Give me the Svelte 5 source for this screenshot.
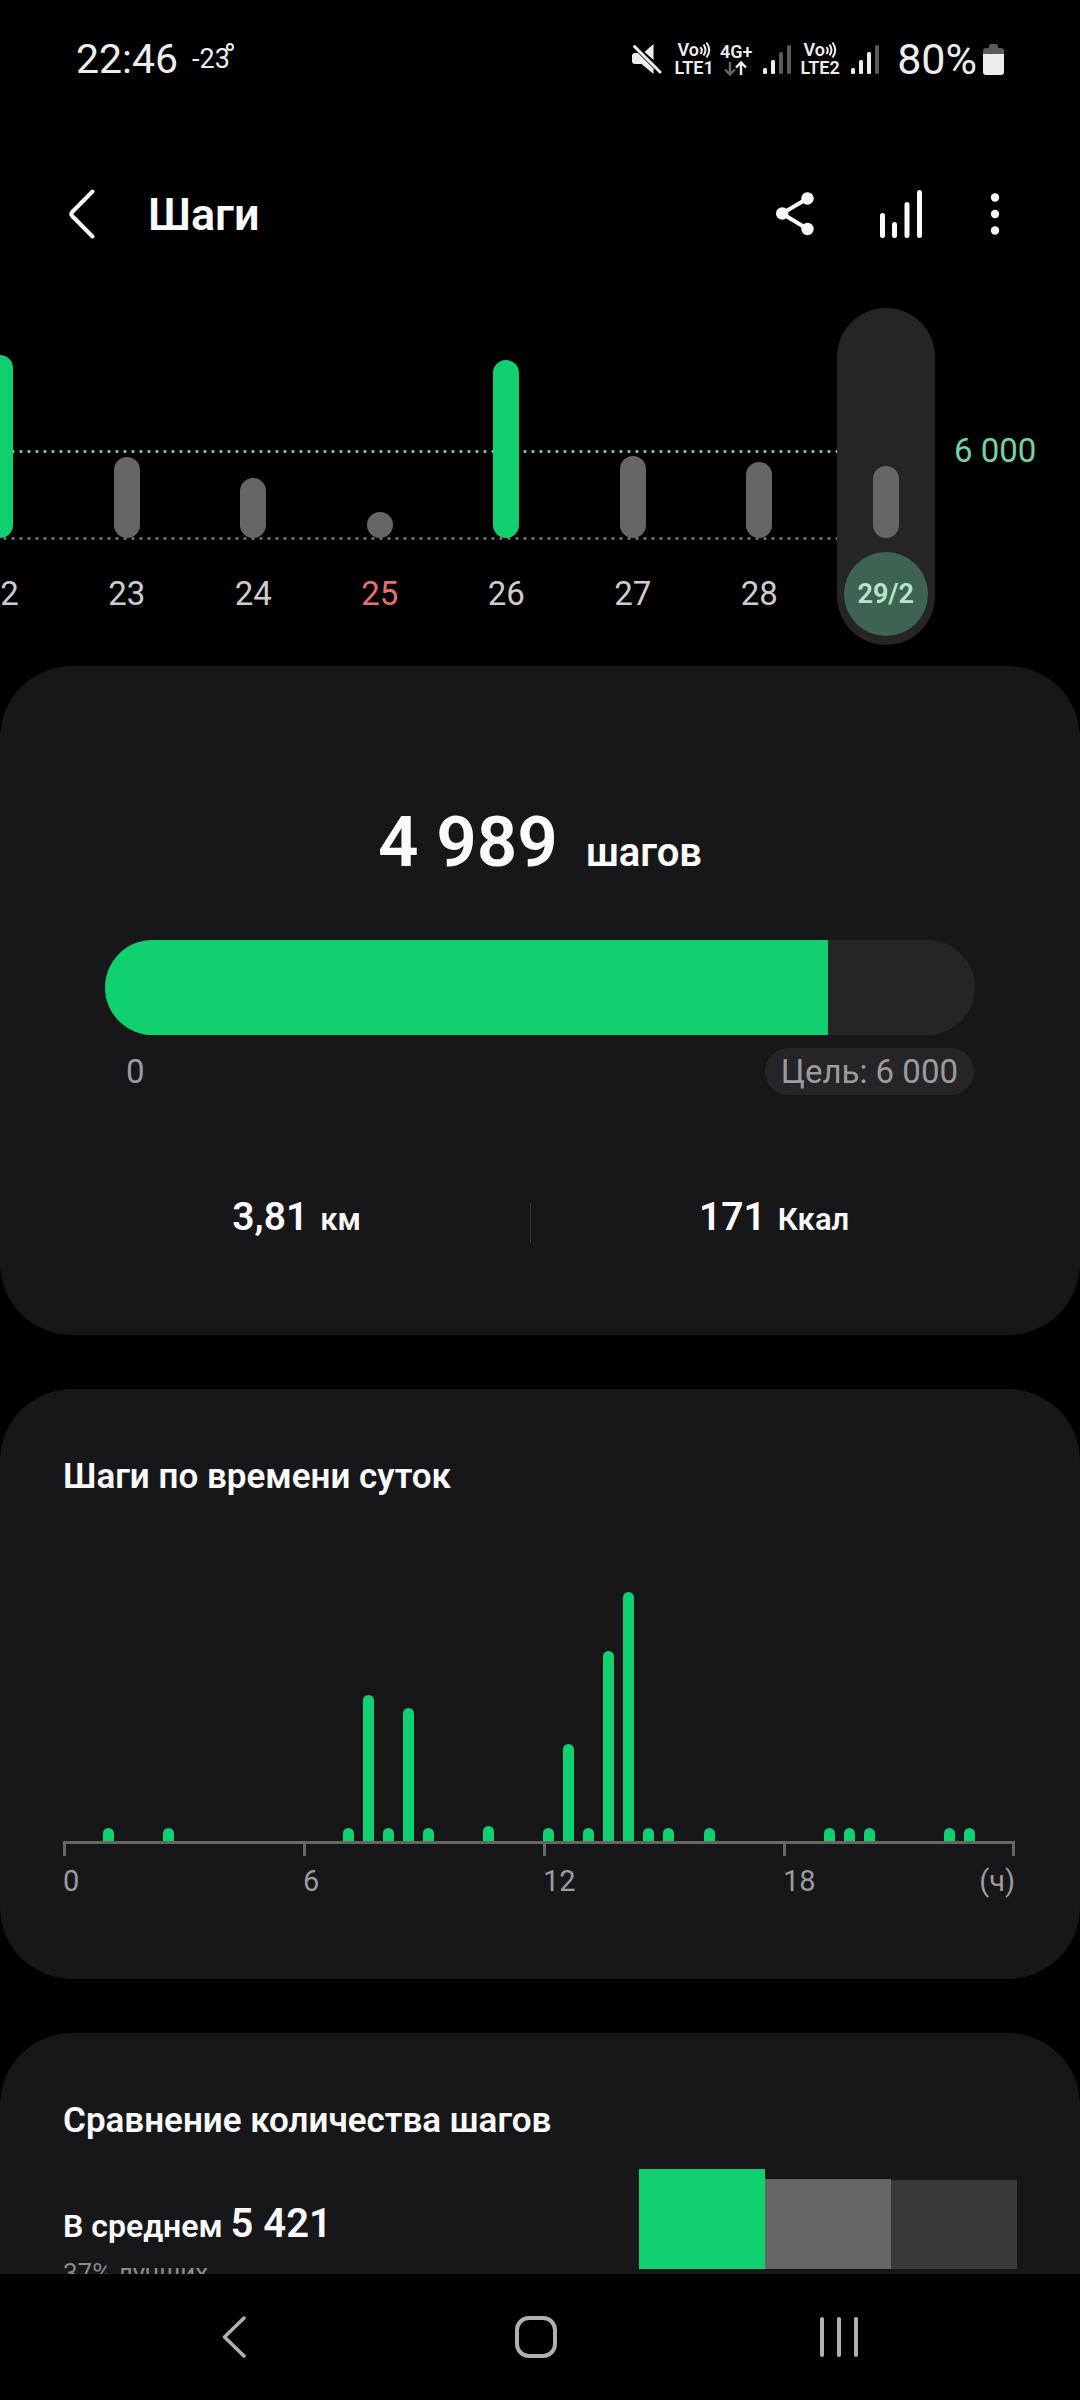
<script>
  const goal = 6000;
  const steps = 4989;

  // bar heights are pixels inside the plot
  const days = [
    { label: '22', height: 183, done: true },
    { label: '23', height: 81 },
    { label: '24', height: 60 },
    { label: '25', height: 26, holiday: true },
    { label: '26', height: 178, done: true },
    { label: '27', height: 82 },
    { label: '28', height: 76 },
    { label: '29/2', height: 72 },
  ];

  let selected = $state('29/2');

  // one slot per half hour
  const activity = {
    2: 13, 5: 13, 14: 13, 15: 146, 16: 13, 17: 133, 18: 13, 21: 15,
    24: 13, 25: 97, 26: 13, 27: 190, 28: 249, 29: 13, 30: 13, 32: 13,
    38: 13, 39: 13, 40: 13, 44: 13, 45: 13,
  };
  const slots = Array.from({ length: 48 }, (_, i) => activity[i] ?? 0);

  const format = (n) => String(n).replace(/\B(?=(\d{3})+$)/g, '\u00a0');
</script>

{#snippet signal(level)}
  <svg class="signal" width="28" height="30" viewBox="0 0 28 30" aria-hidden="true">
    {#each [24, 16, 8, 1] as top, i}
      <rect x={i * 8} y={top} width="4" height={30 - top} rx="1.5" fill={i < level ? '#ededed' : '#5a5a5a'} />
    {/each}
  </svg>
{/snippet}

{#snippet volte(n)}
  <div class="volte">
    <span class="vo">Vo<svg width="12" height="18" viewBox="0 0 12 18" aria-hidden="true">
      <path d="M1.5 6q2.600 3.500 0 7M4.500 3.500q4 5.500 0 11M7.500 1.500q5.500 7.500 0 15" />
    </svg></span>
    <span>LTE{n}</span>
  </div>
{/snippet}

<div class="app">
  <div class="status">
    <span class="time">22:46</span>
    <span class="temp">-23<span class="degree"></span></span>
    <div class="indicators">
      <svg class="mute" width="30" height="31" viewBox="0 0 30 31" aria-hidden="true">
        <path d="M0 12q0-3 3-3h3L21.500 24.500v5.500L9.500 20H3q-3 0-3-3zM12.500 8L21.500 0v16z" fill="#ededed" />
        <path d="M2.500 2.500L28 28" stroke="#ededed" stroke-width="3" stroke-linecap="round" />
      </svg>
      {@render volte(1)}
      <div class="network">
        <span>4G+</span>
        <svg width="24" height="15" viewBox="0 0 24 15" fill="none" stroke-width="2.4" aria-hidden="true">
          <path d="M6 1v12M1 8.500l5 5 5-5" stroke="#666" />
          <path d="M17 14V2M12 6.500l5-5 5 5" stroke="#ededed" />
        </svg>
      </div>
      {@render signal(2)}
      {@render volte(2)}
      {@render signal(3)}
      <span class="percent">80%</span>
      <svg width="21" height="31" viewBox="0 0 21 31" aria-hidden="true">
        <path d="M6 2q0-2 2-2h5q2 0 2 2v2h3q3 0 3 3v4H0V7q0-3 3-3h3z" fill="#5a5a5a" />
        <path d="M0 10h21v18q0 3-3 3H3q-3 0-3-3z" fill="#ededed" />
      </svg>
    </div>
  </div>

  <header>
    <button class="icon" aria-label="Назад">
      <svg width="26" height="50" viewBox="0 0 26 50" fill="none">
        <path d="M23.500 2.500L3.200 23q-2 2 0 4L23.500 47.500" stroke="#fafafa" stroke-width="4" stroke-linecap="round" />
      </svg>
    </button>
    <h1>Шаги</h1>
    <div class="actions">
      <button class="icon" aria-label="Поделиться">
        <svg width="38" height="44" viewBox="0 0 38 44" fill="#fafafa">
          <path d="M31.500 6.500L6 21.500l25.500 15.500" fill="none" stroke="#fafafa" stroke-width="4" />
          <circle cx="31.500" cy="6.500" r="6.200" />
          <circle cx="6.200" cy="21.500" r="6.200" />
          <circle cx="31.500" cy="37" r="6.200" />
        </svg>
      </button>
      <button class="icon" aria-label="Статистика">
        <svg width="44" height="48" viewBox="0 0 44 48" fill="#fafafa">
          <rect x="0" y="23" width="5" height="25" rx="2.500" />
          <rect x="12" y="32" width="5" height="16" rx="2.500" />
          <rect x="24.500" y="12" width="5" height="36" rx="2.500" />
          <rect x="37" y="0" width="5" height="48" rx="2.500" />
        </svg>
      </button>
      <button class="icon" aria-label="Ещё">
        <svg width="10" height="42" viewBox="0 0 10 42" fill="#fafafa">
          <circle cx="5" cy="4.500" r="4.200" />
          <circle cx="5" cy="21" r="4.200" />
          <circle cx="5" cy="37.500" r="4.200" />
        </svg>
      </button>
    </div>
  </header>

  <section class="trend">
    <div class="days">
      {#each days as day}
        <div class="slot">
          <button
            class="day"
            class:selected={day.label === selected}
            class:done={day.done}
            class:holiday={day.holiday}
            onclick={() => (selected = day.label)}
          >
            <span class="column"><span class="bar" style="height: {day.height}px"></span></span>
            <span class="date">{day.label}</span>
          </button>
        </div>
      {/each}
    </div>
    <span class="limit">{format(goal)}</span>
  </section>

  <main>
    <section class="card summary">
      <p class="total"><strong>{format(steps)}</strong><span>шагов</span></p>
      <div class="progress" role="progressbar" aria-label="Шаги" aria-valuemin="0" aria-valuemax={goal} aria-valuenow={steps}>
        <div class="fill" style="width: {(steps / goal) * 100}%"></div>
      </div>
      <div class="scale">
        <span>0</span>
        <span class="goal">Цель: {format(goal)}</span>
      </div>
      <div class="stats">
        <p><strong>3,81</strong><span>км</span></p>
        <div class="divider"></div>
        <p><strong>171</strong><span>Ккал</span></p>
      </div>
    </section>

    <section class="card hourly">
      <h2>Шаги по времени суток</h2>
      <div class="plot">
        {#each slots as height}
          <span style="height: {height}px"></span>
        {/each}
      </div>
      <div class="axis">
        <div><span>0</span></div>
        <div><span>6</span></div>
        <div><span>12</span></div>
        <div class="last"><span>18</span><span>(ч)</span></div>
      </div>
    </section>

    <section class="card compare">
      <h2>Сравнение количества шагов</h2>
      <div class="row">
        <div class="text">
          <p class="average">В среднем <strong>{format(5421)}</strong></p>
          <p class="rank">37% лучших</p>
        </div>
        <div class="blocks">
          <span class="me" style="height: 100px"></span>
          <span class="peers" style="height: 90px"></span>
          <span class="all" style="height: 89px"></span>
        </div>
      </div>
    </section>
  </main>

  <nav>
    <button class="icon" aria-label="Назад">
      <svg width="24" height="42" viewBox="0 0 24 42" fill="none" stroke="#b0b0b0" stroke-width="3.500">
        <path d="M22 2L2.500 21 22 40" stroke-linecap="round" stroke-linejoin="round" />
      </svg>
    </button>
    <button class="icon" aria-label="Главный экран">
      <svg width="42" height="42" viewBox="0 0 42 42" fill="none" stroke="#b0b0b0" stroke-width="4">
        <rect x="2" y="2" width="38" height="38" rx="12" />
      </svg>
    </button>
    <button class="icon" aria-label="Последние">
      <svg width="38" height="40" viewBox="0 0 38 40" fill="#b0b0b0">
        <rect x="0" y="0" width="4" height="40" rx="2" />
        <rect x="17" y="0" width="4" height="40" rx="2" />
        <rect x="34" y="0" width="4" height="40" rx="2" />
      </svg>
    </button>
  </nav>
</div>

<style>
  :global(body) {
    background: #000;
  }

  .app {
    display: flex;
    flex-direction: column;
    height: 100vh;
    overflow: hidden;
    background: #000;
    color: #fafafa;
    font-family: Roboto, "Noto Sans", sans-serif;
  }

  h1, h2, p {
    margin: 0;
  }

  h1, h2, strong {
    font-weight: 600;
  }

  button {
    padding: 0;
    border: none;
    background: none;
    color: inherit;
    font: inherit;
    cursor: pointer;
  }

  svg {
    display: block;
  }

  .status {
    display: flex;
    flex-shrink: 0;
    align-items: center;
    height: 118px;
    padding: 0 76px;
    color: #ededed;
  }

  .time {
    font-size: 41px;
  }

  .temp {
    display: flex;
    margin-left: 14px;
    font-size: 27px;
  }

  .degree {
    width: 4px;
    height: 4px;
    margin-left: -4px;
    border: 2px solid #ededed;
    border-radius: 50%;
  }

  .indicators {
    display: flex;
    align-items: center;
    margin-left: auto;
  }

  .mute {
    margin-right: 3px;
  }

  .volte, .network {
    display: flex;
    flex-direction: column;
    align-items: center;
    font-size: 18px;
    font-weight: 600;
    line-height: 18px;
  }

  .volte {
    width: 42px;
    margin-left: 8px;
  }

  .vo {
    display: flex;
  }

  .vo svg {
    fill: none;
    stroke: #ededed;
    stroke-width: 2;
  }

  .network {
    width: 34px;
    margin-left: 4px;
  }

  .signal {
    margin-left: 10px;
  }

  .percent {
    margin: 0 6px 0 18px;
    font-size: 43px;
  }

  header {
    display: flex;
    flex-shrink: 0;
    align-items: center;
    height: 188px;
    padding: 2px 80px 0 69px;
  }

  h1 {
    margin-left: 53px;
    font-size: 45px;
  }

  .actions {
    display: flex;
    align-items: center;
    gap: 66px;
    margin-left: auto;
  }

  .trend {
    display: flex;
    flex-shrink: 0;
    margin-bottom: 21px;
  }

  .days {
    position: relative;
    display: flex;
    flex: 1;
    margin-left: -63px;
  }

  .days::before, .days::after {
    content: '';
    position: absolute;
    left: 0;
    right: 112px;
    height: 3px;
    background-size: 8px 3px;
  }

  .days::before {
    top: 142px;
    background-image: radial-gradient(circle, #7fdcae 1px, transparent 2px);
  }

  .days::after {
    top: 229px;
    background-image: radial-gradient(circle, #777 1px, transparent 2px);
  }

  .slot {
    display: flex;
    flex: 1;
    justify-content: center;
  }

  .day {
    position: relative;
    z-index: 1;
    display: flex;
    flex-direction: column;
    align-items: center;
    gap: 14px;
    width: 98px;
    padding-bottom: 9px;
    border-radius: 49px;
    color: #cdcdcd;
    font-size: 33px;
  }

  .column {
    display: flex;
    align-items: flex-end;
    height: 230px;
  }

  .bar {
    width: 26px;
    border-radius: 13px;
    background: #666;
  }

  .done .bar {
    background: #11d070;
  }

  .date {
    width: 84px;
    border-radius: 50%;
    line-height: 84px;
  }

  .holiday .date {
    color: #e5736c;
  }

  .selected {
    background: #252527;
  }

  .selected .date {
    background: #3e6352;
    color: #b4e6cd;
    font-size: 27px;
    font-weight: 600;
  }

  .limit {
    width: 126px;
    padding-left: 5px;
    color: #74d49e;
    font-size: 33px;
    line-height: 286px;
  }

  main {
    display: flex;
    flex: 1;
    flex-direction: column;
    gap: 54px;
    min-height: 0;
    overflow: hidden;
  }

  .card {
    flex-shrink: 0;
    padding: 68px 63px 80px;
    border-radius: 72px;
    background: #171719;
  }

  .summary {
    padding: 136px 63px 92px;
  }

  .hourly {
    padding-right: 65px;
  }

  .total {
    display: flex;
    align-items: baseline;
    justify-content: center;
    gap: 28px;
    font-size: 40px;
    font-weight: 600;
    line-height: 80px;
  }

  .total strong {
    font-size: 71px;
  }

  .progress {
    height: 95px;
    margin: 47px 42px 13px;
    border-radius: 48px;
    background: #252527;
    overflow: hidden;
  }

  .fill {
    height: 100%;
    background: #11d070;
  }

  .scale {
    display: flex;
    justify-content: space-between;
    margin: 0 43px 0 63px;
    color: #9c9c9d;
    font-size: 33px;
    line-height: 47px;
  }

  .goal {
    padding: 0 16px;
    border-radius: 24px;
    background: #252527;
  }

  .stats {
    display: grid;
    grid-template-columns: 25fr 1px 26fr;
    margin-top: 102px;
  }

  .stats p {
    display: flex;
    align-items: baseline;
    justify-content: center;
    gap: 12px;
    font-size: 31px;
    font-weight: 600;
    line-height: 40px;
  }

  .stats strong {
    font-size: 39px;
  }

  .divider {
    height: 40px;
    margin-top: 6px;
    background: #343436;
  }

  h2 {
    font-size: 35px;
    line-height: 40px;
  }

  .plot {
    display: flex;
    align-items: flex-end;
    justify-content: space-between;
    height: 249px;
    margin-top: 95px;
  }

  .plot span {
    width: 11px;
    border-radius: 6px 6px 0 0;
    background: #11d070;
  }

  .axis {
    display: grid;
    grid-template-columns: 240fr 240fr 240fr 232fr;
    border-top: 3px solid #666;
    color: #9c9c9d;
    font-size: 29px;
    line-height: 36px;
  }

  .axis div {
    display: flex;
    justify-content: space-between;
    padding-top: 19px;
    background: linear-gradient(#666, #666) left top / 3px 12px no-repeat;
  }

  .axis .last {
    background:
      linear-gradient(#666, #666) left top / 3px 12px no-repeat,
      linear-gradient(#666, #666) right top / 3px 12px no-repeat;
  }

  .row {
    display: flex;
    justify-content: space-between;
    margin-top: 28px;
  }

  .text {
    padding-top: 31px;
  }

  .average {
    font-size: 32px;
    font-weight: 600;
    line-height: 48px;
  }

  .average strong {
    font-size: 40px;
  }

  .rank {
    margin-top: 5px;
    color: #8b8b8c;
    font-size: 26px;
    line-height: 36px;
  }

  .blocks {
    display: flex;
    align-items: flex-end;
    height: 100px;
  }

  .blocks span {
    width: 126px;
  }

  .me {
    background: #11d070;
  }

  .peers {
    background: #666;
  }

  .all {
    background: #3a3a3b;
  }

  nav {
    display: grid;
    flex-shrink: 0;
    grid-template-columns: repeat(3, 1fr);
    height: 126px;
    padding: 0 90px 0 83px;
    background: #000;
  }

  nav .icon {
    display: flex;
    align-items: center;
    justify-content: center;
  }
</style>
